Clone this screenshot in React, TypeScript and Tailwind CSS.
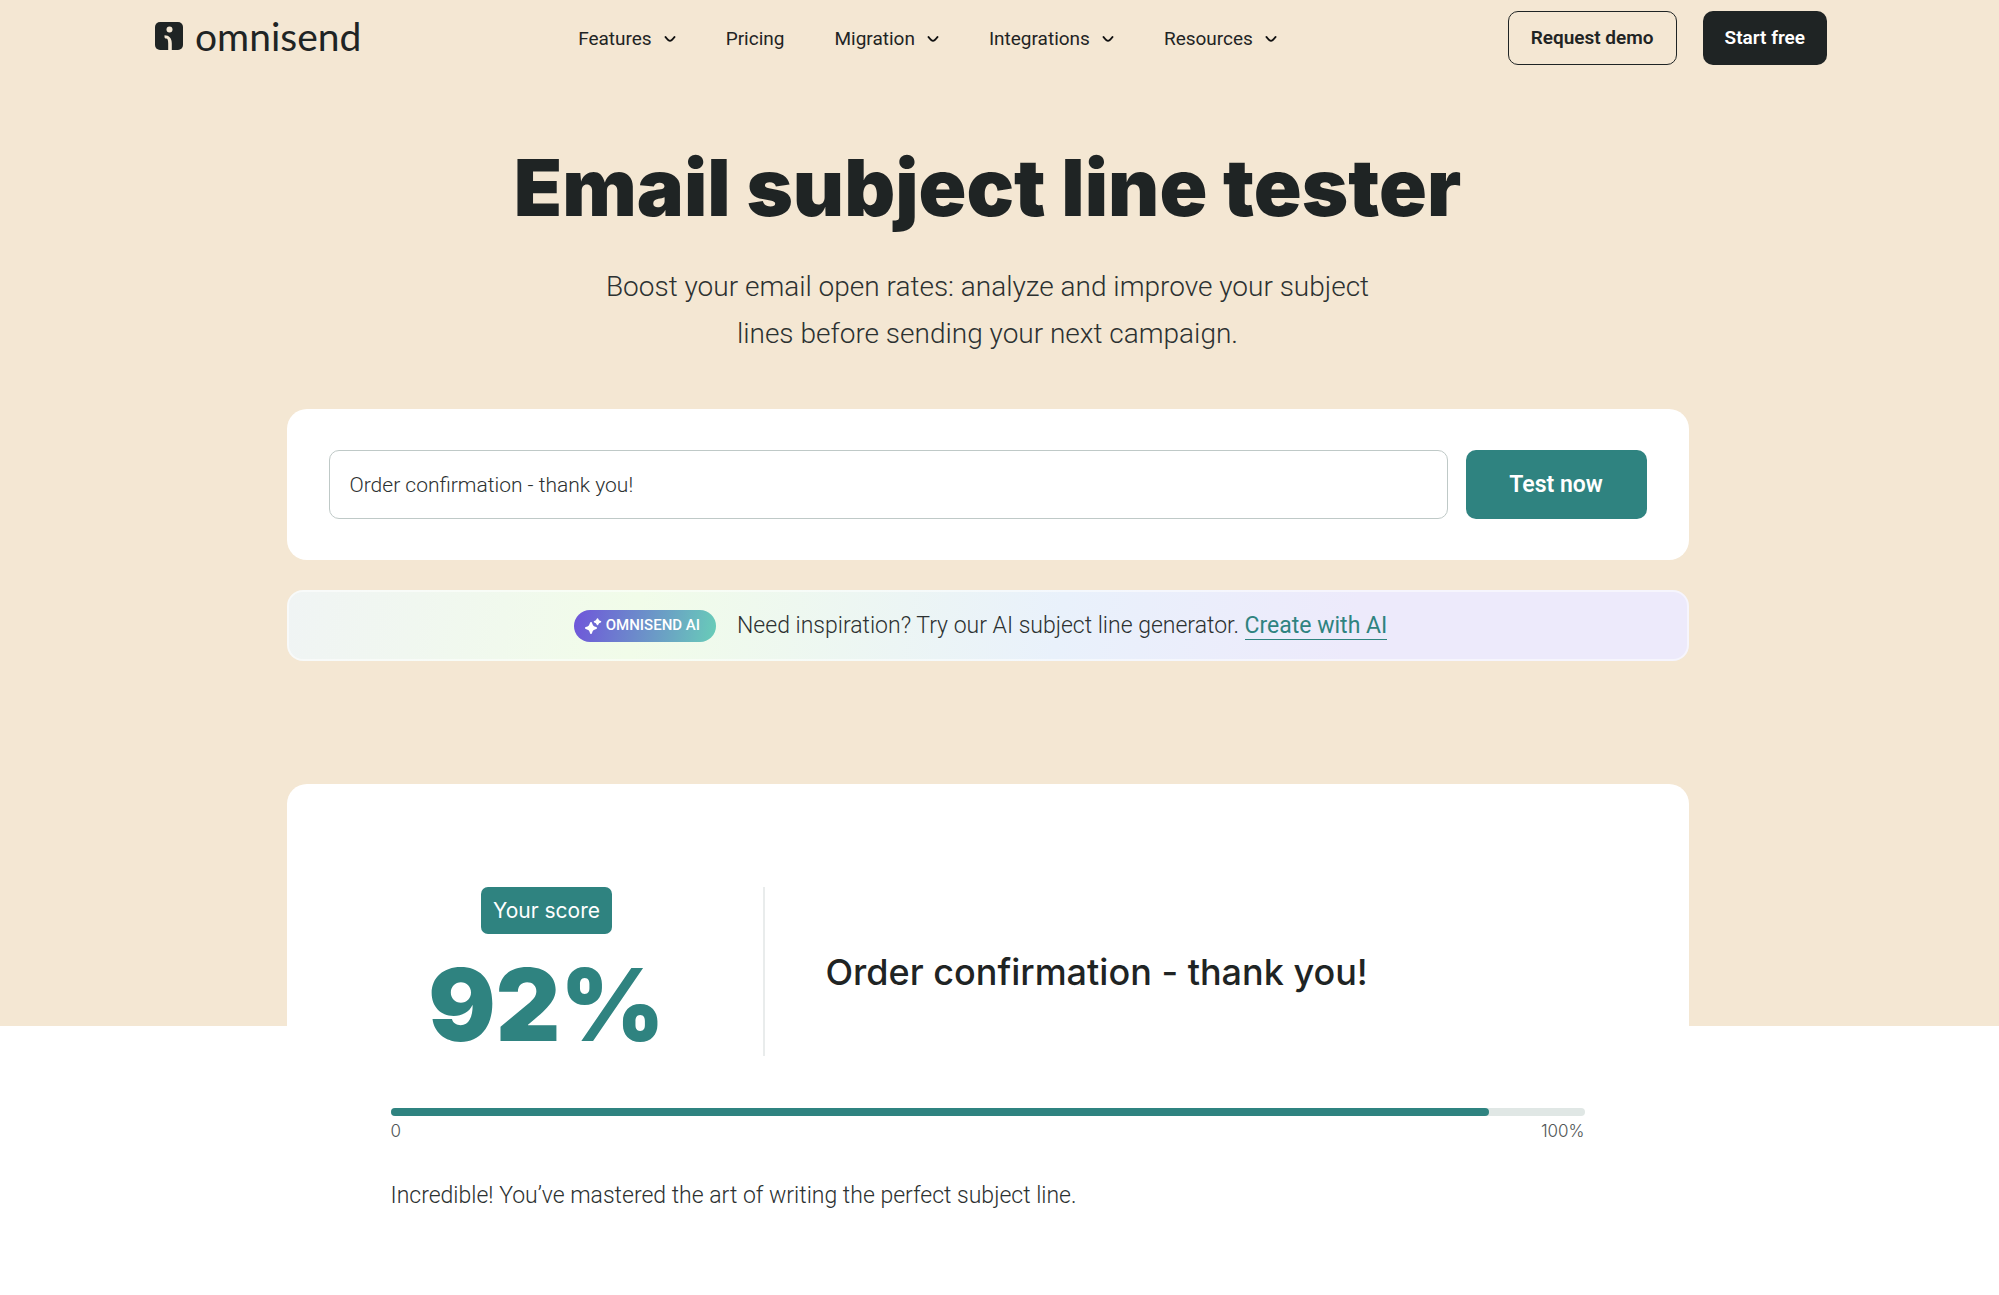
import { useState } from 'react';

const NAV_ITEMS = [
  { label: 'Features', hasMenu: true },
  { label: 'Pricing', hasMenu: false },
  { label: 'Migration', hasMenu: true },
  { label: 'Integrations', hasMenu: true },
  { label: 'Resources', hasMenu: true },
];

const SCORE = 92;

function LogoMark() {
  return (
    <svg viewBox="0 0 28 28" className="w-7 h-7" aria-hidden="true">
      <rect width="28" height="28" rx="5" fill="#1f2424" />
      <circle cx="14.5" cy="7.5" r="3" fill="#f4e7d3" />
      <path d="M9.500 13.200c4.700 0 7.300 3 7.300 8.200V28h-3.600v-6.400c0-3.400-.4-5.200-2.200-5.200-1 0-1.500-.6-1.500-1.500z" fill="#f4e7d3" />
    </svg>
  );
}

function Chevron() {
  return (
    <svg viewBox="0 0 12 8" className="w-3 h-2" fill="none" aria-hidden="true">
      <path d="M1.500 2C3 4 4.500 5.800 6 5.800S9 4 10.500 2" stroke="#111" strokeWidth="2" strokeLinecap="round" strokeLinejoin="round" />
    </svg>
  );
}

function Sparkles() {
  return (
    <svg viewBox="0 0 18 18" className="w-[18px] h-[18px]" fill="#fff" aria-hidden="true">
      <path d="M7 6c1 3.300 1.800 4.100 5 5-3.200.9-4 1.700-5 5-1-3.300-1.800-4.100-5-5 3.200-.9 4-1.700 5-5z" stroke="#fff" strokeWidth="2" strokeLinejoin="round" />
      <path d="M13.500 2c.5 1.800 1.100 2.300 3 2.800-1.900.5-2.500 1-3 2.800-.5-1.800-1.100-2.300-3-2.800 1.900-.5 2.500-1 3-2.800z" stroke="#fff" strokeWidth="1.500" strokeLinejoin="round" />
    </svg>
  );
}

export default function App() {
  const [subject, setSubject] = useState('Order confirmation - thank you!');
  const [tested, setTested] = useState(subject);

  const handleSubmit = (e: React.FormEvent) => {
    e.preventDefault();
    setTested(subject);
  };

  return (
    <div className="min-h-screen bg-white font-['Roboto',sans-serif] text-[#1f2424]">
      <div className="bg-[#f4e7d3] pr-6 pb-[365px]">
        <header className="max-w-[1679px] mx-auto pt-[11px] pl-[7px] flex items-center justify-between">
          <a href="#" className="pb-1 flex items-center gap-3">
            <LogoMark />
            <span className="font-['Lato',sans-serif] text-[39px] leading-[48px]">omnisend</span>
          </a>
          <nav className="mr-[14px] pt-[2px] flex items-center gap-[50px] text-[19px]">
            {NAV_ITEMS.map(item => (
              <a key={item.label} href="#" className="flex items-center gap-3">
                {item.label}
                {item.hasMenu && <Chevron />}
              </a>
            ))}
          </nav>
          <div className="flex items-center gap-[26px] text-[19px] font-semibold">
            <button type="button" className="h-[54px] px-[22px] border border-[#1f2424] rounded-[10px]">
              Request demo
            </button>
            <button type="button" className="h-[54px] px-[22px] bg-[#1f2424] text-white rounded-[10px]">
              Start free
            </button>
          </div>
        </header>

        <main className="max-w-[1402px] mx-auto">
          <h1 className="mt-[74px] text-center font-['Inter',sans-serif] font-black text-[79px] leading-[96px]">
            Email subject line tester
          </h1>
          <p className="max-w-[800px] mx-auto mt-7 text-center font-light text-[28px] leading-[47px] text-[#2c3131]">
            Boost your email open rates: analyze and improve your subject lines before sending your next campaign.
          </p>

          <form onSubmit={handleSubmit} className="mt-[52px] px-[42px] py-[41px] flex gap-[18px] bg-white rounded-[20px]">
            <input
              type="text"
              aria-label="Subject line"
              value={subject}
              onChange={(e) => setSubject(e.target.value)}
              className="flex-1 min-w-0 h-[69px] px-5 border border-[#bfc9c7] rounded-[10px] font-light text-[21px] text-[#2c3131] focus:outline-none"
            />
            <button type="submit" className="w-[181px] h-[69px] pt-[2px] bg-[#2f8380] text-white text-[23px] font-semibold rounded-[10px]">
              Test now
            </button>
          </form>

          <div className="mt-[30px] h-[71px] pr-[14px] flex items-center justify-center gap-[21px] border-2 border-white/50 bg-origin-border rounded-[16px] bg-[linear-gradient(100deg,#f0f4f4_0%,#f1fce9_25%,#e9f1fb_55%,#edeafb_76%)]">
            <span className="h-8 pl-[10px] pr-4 flex items-center gap-1 rounded-full bg-[linear-gradient(100deg,#6f55da,#68cdb8)] text-white text-[15px] font-medium">
              <Sparkles />
              OMNISEND AI
            </span>
            <p className="pt-[2px] font-light text-[23px] text-[#2c3131]">
              Need inspiration? Try our AI subject line generator.{' '}
              <a href="#" className="font-normal text-[#2f8380] border-b border-[#2f8380]">Create with AI</a>
            </p>
          </div>
        </main>
      </div>

      <div className="pr-6 -mt-[242px]">
        <section className="max-w-[1402px] mx-auto px-[104px] pt-[103px] pb-20 bg-white rounded-t-[20px]">
          <div className="flex">
            <div className="w-[374px] pr-[60px] flex flex-col items-center border-r-2 border-[#e9ecec]">
              <span className="px-3 rounded-[7px] bg-[#2f8380] text-white font-['Inter',sans-serif] text-[21px] leading-[47px]">
                Your score
              </span>
              <span className="mt-5 font-['Inter',sans-serif] font-black text-[100px] leading-[102px] text-[#2f8380]">
                {SCORE}%
              </span>
            </div>
            <h2 className="flex-1 self-center pl-[61px] font-['Inter',sans-serif] font-medium text-[36px] leading-[46px]">
              {tested}
            </h2>
          </div>

          <div className="mt-[52px] h-2 rounded-full bg-[#e0e7e5]">
            <div className="h-2 rounded-full bg-[#2f8380]" style={{ width: `${SCORE}%` }} />
          </div>
          <div className="mt-[3px] flex justify-between font-['Inter',sans-serif] font-light text-[17px] leading-6 text-[#4f5555]">
            <span>0</span>
            <span>100%</span>
          </div>
          <p className="mt-9 font-light text-[23px] leading-[34px] text-[#2c3131]">
            Incredible! You’ve mastered the art of writing the perfect subject line.
          </p>
        </section>
      </div>
    </div>
  );
}
